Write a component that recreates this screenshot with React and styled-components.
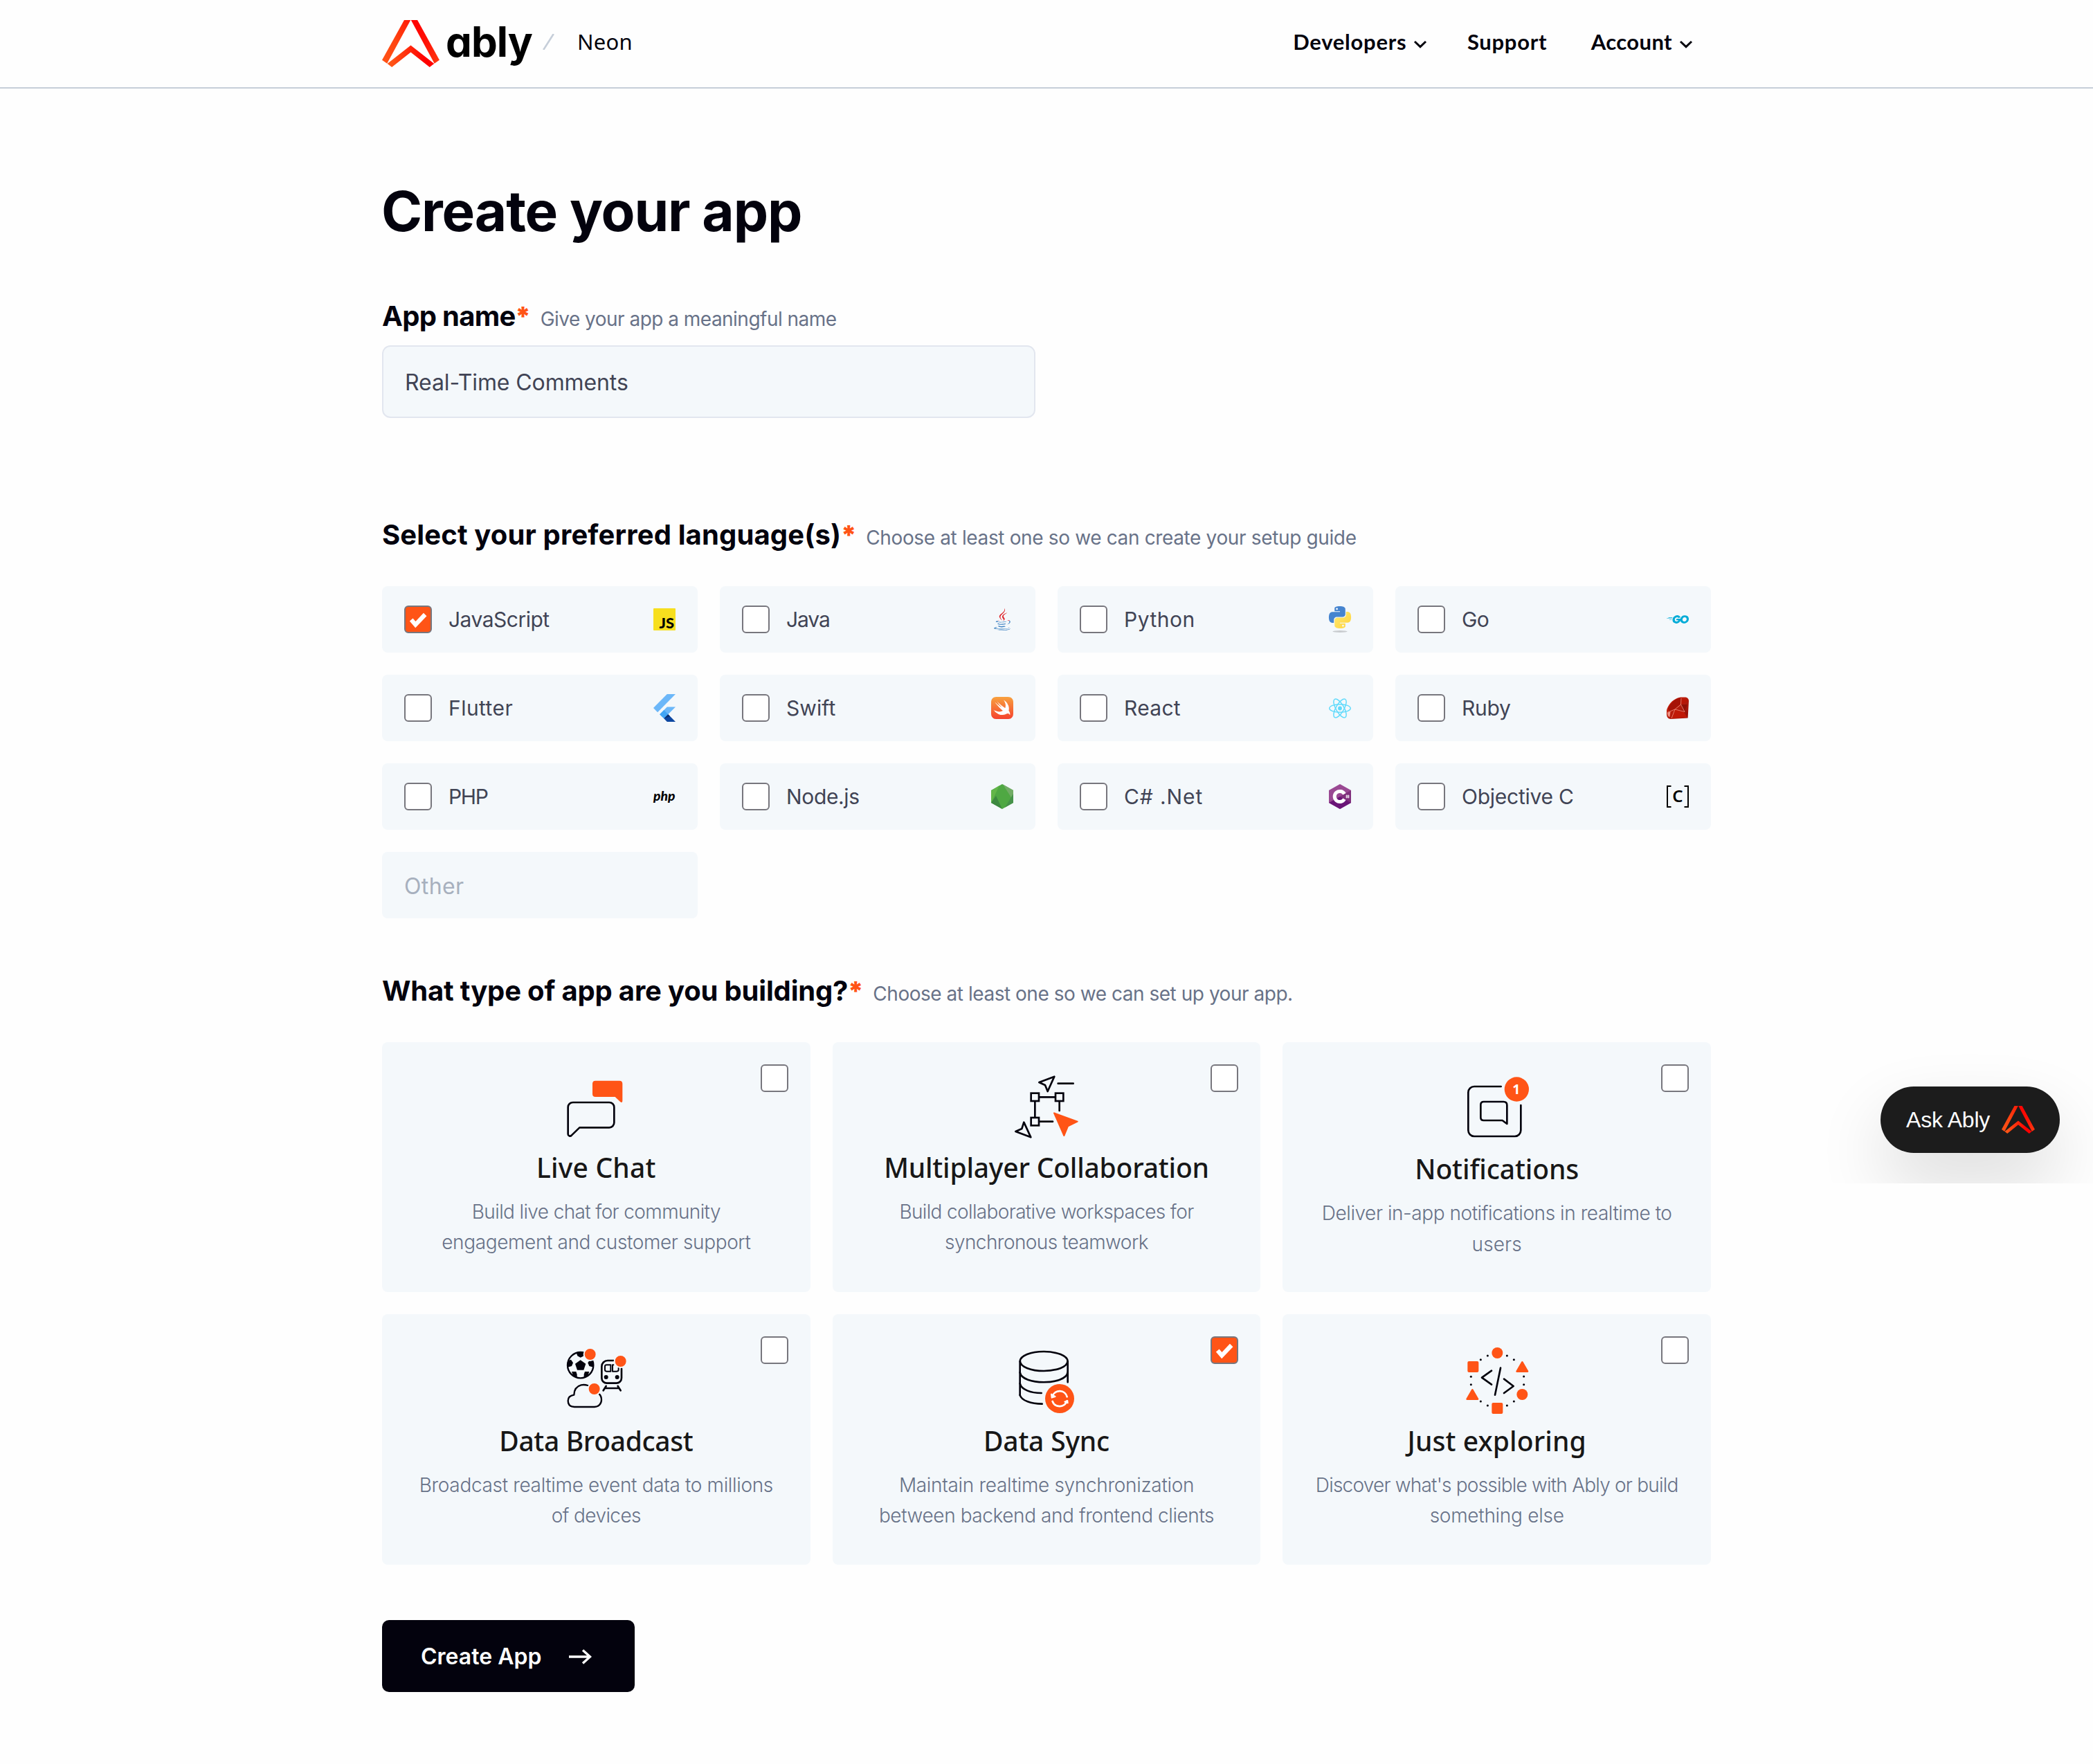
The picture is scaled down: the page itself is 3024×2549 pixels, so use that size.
import React from "react";
import styled, { createGlobalStyle, css } from "styled-components";
import { FaJava } from "react-icons/fa";
import { SiGo, SiSwift } from "react-icons/si";

const color = {
  page: "#fefefe",
  ink: "#03020d",
  text: "#414455",
  muted: "#687288",
  faint: "#a7b0be",
  panel: "#f4f8fb",
  line: "#c6ced9",
  orange: "#ff5416",
};

const sans = `Inter, "Noto Sans", sans-serif`;
const humanist = `Lato, "Noto Sans", sans-serif`;

const GlobalStyle = createGlobalStyle`
  *, *::before, *::after { box-sizing: border-box; }
  body {
    margin: 0;
    background: ${color.page};
    color: ${color.ink};
    font-family: ${sans};
  }
`;

const Page = styled.div`
  position: relative;
  min-height: 2549px;
  overflow: hidden;
`;

/* ---------- header ---------- */

const Header = styled.header`
  height: 128px;
  border-bottom: 2px solid ${color.line};
  background: ${color.page};
`;

const HeaderInner = styled.div`
  width: 1920px;
  height: 100%;
  margin: 0 auto;
  display: flex;
  align-items: center;
`;

const Brand = styled.div`
  display: flex;
  align-items: center;
  flex: 1;
`;

const Wordmark = styled.span`
  width: 123px;
  padding-bottom: 6px;
  margin-left: 9px;
  font-family: Inter, sans-serif;
  font-weight: 700;
  font-size: 60px;
  line-height: 72px;
  letter-spacing: -0.9px;
  font-feature-settings: "cv11" 1;
  color: #000;
`;

const SlashIcon = styled.svg`
  width: 17px;
  height: 23px;
  margin: 0 33px 5px 17px;
`;

const OrgName = styled.span`
  padding-bottom: 6px;
  font: 400 31px/40px "Noto Sans", sans-serif;
  letter-spacing: 0.2px;
`;

const Nav = styled.nav`
  display: flex;
  align-items: center;
  padding: 0 26px 6px 0;
`;

const NavItem = styled.a`
  display: flex;
  align-items: center;
  gap: 10px;
  margin-left: ${(p) => p.$before || 0}px;
  font: 700 31px/40px ${humanist};
  letter-spacing: ${(p) => p.$ls}px;
`;

const ChevronIcon = styled.svg`
  width: 20px;
  height: 12px;
  margin-top: 8px;
`;

/* ---------- form ---------- */

const Main = styled.main`
  width: 1920px;
  margin: 0 auto;
  padding-top: 129px;
`;

const Title = styled.h1`
  margin: 0 0 80px -1px;
  font: 700 80px/96px ${sans};
  letter-spacing: -1.13px;
`;

const FieldLabel = styled.div`
  display: flex;
  align-items: baseline;
  height: 48px;
  margin-bottom: ${(p) => p.$gap}px;
`;

const LabelText = styled.label`
  font: 700 40px/48px ${sans};
  letter-spacing: ${(p) => p.$ls}px;
  white-space: nowrap;
`;

const Required = styled.span`
  width: 20px;
  margin: 0 15px 0 1px;
  display: flex;
  justify-content: center;
  font: 900 38px/48px ${sans};
  color: ${color.orange};
`;

const Hint = styled.span`
  font: 400 28px/48px ${sans};
  letter-spacing: ${(p) => p.$ls}px;
  color: ${color.muted};
  white-space: nowrap;
`;

const NameInput = styled.input`
  display: block;
  width: 944px;
  height: 105px;
  margin: 0 0 145px;
  padding: 2px 31px 0;
  border: 2px solid #e2e6ef;
  border-radius: 12px;
  outline: none;
  background: ${color.panel};
  color: ${color.text};
  font: 400 32px ${sans};
  letter-spacing: -0.1px;
`;

const LanguageGrid = styled.div`
  display: grid;
  grid-template-columns: repeat(4, 1fr);
  grid-auto-rows: 96px;
  gap: 32px;
  margin-bottom: 81px;
`;

const LanguageCard = styled.label`
  display: flex;
  align-items: center;
  gap: 24px;
  padding: 0 32px;
  border-radius: 8px;
  background: ${color.panel};
`;

const LanguageName = styled.span`
  flex: 1;
  font: 400 30px/40px ${sans};
  letter-spacing: ${(p) => p.$ls}px;
  color: ${color.text};
  white-space: nowrap;
`;

const IconSlot = styled.span`
  width: 32px;
  height: 40px;
  display: flex;
  align-items: center;
  justify-content: center;
  svg { display: block; overflow: visible; }
`;

const OtherInput = styled.input`
  width: 100%;
  height: 96px;
  padding: 3px 32px 0;
  border: 0;
  border-radius: 8px;
  outline: none;
  background: ${color.panel};
  font: 400 32px ${sans};
  letter-spacing: 0.37px;
  &::placeholder { color: ${color.faint}; opacity: 1; }
`;

const checkedStyle = css`
  background: ${color.orange};
`;

const Box = styled.span`
  flex: none;
  width: 40px;
  height: 40px;
  border: 2px solid #77767d;
  border-radius: 6px;
  background: #fff;
  ${(p) => p.$checked && checkedStyle}
  svg { display: block; width: 36px; height: 36px; }
`;

function Checkbox({ checked, className }) {
  return (
    <Box $checked={checked} className={className}>
      {checked && (
        <svg viewBox="0 0 36 36">
          <path d="M8.2 18.5 14.3 25.6 28.2 11" fill="none" stroke="#fff" strokeWidth="6.200" />
        </svg>
      )}
    </Box>
  );
}

/* ---------- app types ---------- */

const TypeGrid = styled.div`
  display: grid;
  grid-template-columns: repeat(3, 1fr);
  grid-template-rows: 361px 362px;
  gap: 32px;
  margin-bottom: 80px;
`;

const TypeCard = styled.label`
  position: relative;
  display: flex;
  flex-direction: column;
  align-items: center;
  padding-top: 44px;
  border-radius: 8px;
  background: ${color.panel};
`;

const CornerCheckbox = styled(Checkbox)`
  position: absolute;
  top: 32px;
  right: 32px;
`;

const TypeIcon = styled.svg`
  width: 100px;
  height: 104px;
  overflow: visible;
  fill: none;
  stroke: ${color.ink};
  stroke-width: 8;
  stroke-linecap: round;
  stroke-linejoin: round;
`;

const TypeName = styled.h2`
  margin: ${(p) => 5 + p.$drop}px 0 13.5px;
  font: 500 39px/56px "Noto Sans", sans-serif;
  letter-spacing: ${(p) => p.$ls}px;
  color: #171717;
  white-space: nowrap;
`;

const TypeLine = styled.span`
  font: 300 28px/44.7px ${sans};
  letter-spacing: ${(p) => p.$ls}px;
  color: ${color.muted};
  white-space: nowrap;
`;

const SubmitButton = styled.button`
  width: 365px;
  height: 104px;
  padding: 1px 0 0 56px;
  display: flex;
  align-items: center;
  gap: 39px;
  border: 0;
  border-radius: 10px;
  background: ${color.ink};
  color: #fff;
  font: 600 32px/40px ${sans};
  svg { width: 34px; height: 24px; }
`;

/* ---------- floating assistant ---------- */

const AssistantFrame = styled.aside`
  position: absolute;
  top: 1440px;
  right: 0;
  width: 384px;
  height: 270px;
  overflow: hidden;
  display: flex;
  justify-content: flex-end;
  align-items: flex-end;
  padding: 0 48px 44px 0;
`;

const AssistantPill = styled.button`
  width: 259px;
  height: 96px;
  padding: 0 36px 0 37px;
  display: flex;
  align-items: center;
  justify-content: space-between;
  border: 0;
  border-radius: 48px;
  background: #1c1c1c;
  box-shadow: 0 44px 100px rgba(0, 0, 0, 0.14);
  color: #fff;
  font: 400 32px/40px "Liberation Sans", Arial, sans-serif;
  letter-spacing: -0.2px;
  white-space: nowrap;
`;

/* ---------- drawings ---------- */

function AblyMark({ id, width, height }) {
  return (
    <svg width={width} height={height} viewBox="0 0 82.5 68" preserveAspectRatio="none">
      <defs>
        <linearGradient id={`${id}-l`} x1="0" y1="1" x2="1" y2="0">
          <stop offset="0" stopColor="#ff5416" />
          <stop offset="0.5" stopColor="#ff4411" />
          <stop offset="1" stopColor="#ff1a06" />
        </linearGradient>
        <linearGradient id={`${id}-r`} x1="0" y1="0" x2="1" y2="1">
          <stop offset="0" stopColor="#ff0000" />
          <stop offset="0.5" stopColor="#ff1005" />
          <stop offset="1" stopColor="#ff3a10" />
        </linearGradient>
        <linearGradient id={`${id}-c`} x1="0" y1="0" x2="1" y2="0">
          <stop offset="0.1" stopColor="#ff5416" />
          <stop offset="0.8" stopColor="#ff0000" />
        </linearGradient>
      </defs>
      <path d="M31.8 0H41L7.2 62.8 0 57.8Z" fill={`url(#${id}-l)`} />
      <path d="M41.6 0H50.8L82.4 57.8 75.2 62.8Z" fill={`url(#${id}-r)`} />
      <path d="M7.6 63 41.2 36.6 74.8 63 68.3 68 41.2 46.4 14.1 68Z" fill={`url(#${id}-c)`} />
    </svg>
  );
}

const Chevron = () => (
  <ChevronIcon viewBox="0 0 20 12">
    <path d="M2 2 10 9.6 18 2" fill="none" stroke={color.ink} strokeWidth="3" />
  </ChevronIcon>
);

const JsIcon = () => (
  <svg width="32" height="32" viewBox="0 0 32 32">
    <rect width="32" height="32" rx="1" fill="#f7df1e" />
    <text x="8.4" y="28.8" textLength="21.6" lengthAdjust="spacingAndGlyphs" fontFamily="Lato" fontWeight="900" fontSize="20">JS</text>
  </svg>
);

const JavaIcon = () => (
  <>
    <svg width="0" height="0">
      <linearGradient id="java" x1="0" y1="0" x2="0" y2="1">
        <stop offset="0.56" stopColor="#e0242b" />
        <stop offset="0.56" stopColor="#3a7fc0" />
      </linearGradient>
    </svg>
    <FaJava size={32} fill="url(#java)" />
  </>
);

const pythonHalf =
  "M14.25.18l.9.2.73.26.59.3.45.32.34.34.25.34.16.33.1.3.04.26.02.2-.01.13V8.5l-.05.63-.13.55-.21.46-.26.38-.3.31-.33.25-.35.19-.35.14-.33.1-.3.07-.26.04-.21.02H8.77l-.69.05-.59.14-.5.22-.41.27-.33.32-.27.35-.2.36-.15.37-.1.35-.07.32-.04.27-.02.21v3.06H3.17l-.21-.03-.28-.07-.32-.12-.35-.18-.36-.26-.36-.36-.35-.46-.32-.59-.28-.73-.21-.88-.14-1.05-.05-1.23.06-1.22.16-1.04.24-.87.32-.71.36-.57.4-.44.42-.33.42-.24.4-.16.36-.1.32-.05.24-.01h.16l.06.01h8.16v-.83H6.18l-.01-2.75-.02-.37.05-.34.11-.31.17-.28.25-.26.31-.23.38-.2.44-.18.51-.15.58-.12.64-.1.71-.06.77-.04.84-.02 1.27.05zm-6.3 1.98l-.23.33-.08.41.08.41.23.34.33.22.41.09.41-.09.33-.22.23-.34.08-.41-.08-.41-.23-.33-.33-.22-.41-.09-.41.09z";

const PythonIcon = () => (
  <svg width="32" height="39" viewBox="0 0 24 29.25">
    <linearGradient id="py-y" x1="0" y1="0" x2="1" y2="1">
      <stop offset="0" stopColor="#ffd43b" />
      <stop offset="1" stopColor="#ffe873" />
    </linearGradient>
    <ellipse cx="12" cy="27.4" rx="8" ry="1.1" fill="#c9cccf" />
    <path d={pythonHalf} fill="#4584cf" />
    <path d={pythonHalf} fill="url(#py-y)" transform="rotate(180 12 12)" />
  </svg>
);

const GoIcon = () => <SiGo size={32} color="#00acd7" />;

const FlutterIcon = () => (
  <svg width="32" height="40" viewBox="2.3 0 19.4 24" preserveAspectRatio="none">
    <path d="M14.3 0 2.3 12 6 15.7 21.7 0Z" fill="#6bb7f9" />
    <path d="M14.3 11.07 7.86 17.53 11.55 21.2 21.7 11.07Z" fill="#6bb7f9" />
    <path d="M7.86 17.53 11.55 13.84 15.24 17.53 11.55 21.22Z" fill="#42a5f5" />
    <path d="M11.55 21.22 15.24 17.53 21.7 24H14.33Z" fill="#0d47a1" />
    <path d="M11.55 21.22 17 19.3 15.24 17.53Z" fill="#0a2f70" />
  </svg>
);

const SwiftIcon = () => (
  <svg width="32" height="32" viewBox="0 0 32 32">
    <linearGradient id="swift" x1="0" y1="0" x2="0" y2="1">
      <stop offset="0" stopColor="#f8a13e" />
      <stop offset="1" stopColor="#f5432f" />
    </linearGradient>
    <rect x="3" y="3" width="26" height="26" fill="#fff" />
    <SiSwift size={32} fill="url(#swift)" />
  </svg>
);

const ReactIcon = () => (
  <svg width="32" height="29" viewBox="-16 -14.5 32 29" fill="none" stroke="#61dafb" strokeWidth="1.5">
    {[0, 60, 120].map((angle) => (
      <ellipse key={angle} rx="15.2" ry="5.8" transform={`rotate(${angle})`} />
    ))}
    <circle r="2.9" fill="#61dafb" stroke="none" />
  </svg>
);

const RubyIcon = () => (
  <svg width="32" height="32" viewBox="0 0 32 32">
    <linearGradient id="ruby" x1="0" y1="0" x2="1" y2="1">
      <stop offset="0" stopColor="#dd2a12" />
      <stop offset="1" stopColor="#8c0d06" />
    </linearGradient>
    <path d="M25 .6C29 .2 32 2 32 6L30.6 30.6 6 32C2 32 0 29 0 25V19C2 12 7 6 13 3 17 .6 20 .5 25 .6Z" fill="url(#ruby)" />
    <path d="M20 1C13 2 5 9 2 17L4 22 12 17 20 10 22 4Z" fill="#a51307" />
    <path d="M22 2 32 5 21 11Z" fill="#b81606" />
    <path d="M20 11 30 11 26 21Z" fill="#8e1006" />
    <path d="M13 18 25 22 30 30 7 31Z" fill="#c01a08" />
    <path d="M21 2 20.5 11 12 18 1 22.5M12 18 7 31M20.5 11 26 21.5M12 18 26 21.5" fill="none" stroke="#f0907f" strokeWidth="0.8" />
    <path d="M1 23 5.5 21 4.5 29C2.5 29 1 26 1 23Z" fill="#ef9183" />
  </svg>
);

const PhpIcon = () => (
  <svg width="32" height="18" viewBox="0 0 32 18">
    <text x="0" y="14.5" textLength="31.5" lengthAdjust="spacingAndGlyphs" fontFamily="Lato" fontStyle="italic" fontWeight="900" fontSize="19">php</text>
  </svg>
);

const NodeIcon = () => (
  <svg width="32" height="36" viewBox="0 0 32 36">
    <path d="M16 0 32 9V27L16 36 0 27V9Z" fill="#4fa843" />
    <path d="M0 10 12 1.9 0 27Z" fill="#63b649" />
    <path d="M17 .6 32 9V24Z" fill="#72ac66" />
    <path d="M0 27 7 17 16 36Z" fill="#3d8840" />
    <path d="M20 33.7 32 14V27Z" fill="#46924a" />
  </svg>
);

const CSharpIcon = () => (
  <svg width="32" height="36" viewBox="0 0 32 36">
    <path d="M16 0 32 9V27L16 36 0 27V9Z" fill="#9a4993" />
    <path d="M32 9V27L16 18Z" fill="#80307c" />
    <path d="M0 27 16 18 32 27 16 36Z" fill="#6a1577" />
    <path d="M22.4 14.2A7.6 7.6 0 1 0 22.4 21.8" fill="none" stroke="#fff" strokeWidth="5" />
    <path d="M25.8 15.5V20.5M28.2 15.5V20.5M24.4 17H29.6M24.4 19H29.6" stroke="#fff" strokeWidth="0.9" />
  </svg>
);

const ObjectiveCIcon = () => (
  <svg width="32" height="32" viewBox="0 0 32 32">
    <path d="M6.5 1H1V31H6.5M25.5 1H31V31H25.5" fill="none" stroke="#000" strokeWidth="2" />
    <text x="16" y="24.2" textAnchor="middle" fontFamily="Noto Sans" fontWeight="600" fontSize="24">C</text>
  </svg>
);

const LiveChatIcon = () => (
  <TypeIcon viewBox="94 30 300 312">
    <path d="M242 65H346Q359 65 359 78V152Q359 162 350 157L327 135H242Q229 135 229 122V78Q229 65 242 65Z" fill={color.orange} stroke="none" />
    <path d="M144 159H302A21 21 0 0 1 323 180V247A21 21 0 0 1 302 268H173L139 301Q134 307 128 304 123 302 123 296V180A21 21 0 0 1 144 159Z" />
  </TypeIcon>
);

const MultiplayerIcon = () => (
  <TypeIcon viewBox="186 60 300 312">
    <g strokeLinejoin="miter">
      <rect x="269" y="149" width="34" height="34" />
      <rect x="375" y="149" width="34" height="34" />
      <rect x="269" y="255" width="34" height="34" />
    </g>
    <path d="M305 166H373M286 185V253M392 185V225M305 272H363" />
    <path d="M386 107H452" />
    <path d="M370 77 304 102 330 114 341 141Z" />
    <path d="M238 275 268 340 202 315 229 303Z" />
    <path d="M369 235 470 272 429 292 412 333Z" fill={color.orange} stroke={color.orange} strokeWidth="6" />
  </TypeIcon>
);

const NotificationsIcon = () => (
  <TypeIcon viewBox="158 60 300 312">
    <path d="M325 120H209A26 26 0 0 0 183 146V310A26 26 0 0 0 209 336H385A26 26 0 0 0 411 310V201" />
    <path d="M250 186H336Q351 186 351 201V282L331 267H250Q237 267 237 254V199Q237 186 250 186Z" />
    <circle cx="393" cy="132" r="53" fill={color.orange} stroke="none" />
    <text x="391" y="153" textAnchor="middle" fill="#fff" stroke="none" fontFamily="Noto Sans" fontWeight="700" fontSize="58">1</text>
  </TypeIcon>
);

const BroadcastIcon = () => (
  <TypeIcon viewBox="94 99 300 312">
    <circle cx="177" cy="188" r="56" strokeWidth="7" />
    <g fill={color.ink} stroke="none">
      <path d="M177 166 200 182 191 209H163L154 182Z" />
      <path d="M158 132H196L189 149 177 155 164 148Z" />
      <path d="M121 197 125 168 136 164 145 178 139 192Z" />
      <path d="M233 197 229 168 218 164 209 178 215 192Z" />
      <path d="M139 216H158L162 228V241L146 236Z" />
      <path d="M215 216H196L192 228V241L208 236Z" />
    </g>
    <path d="M320 168H295A26 26 0 0 0 269 194V244A22 22 0 0 0 291 266H333A22 22 0 0 0 355 244V203" />
    <path d="M308 187H290Q283 187 283 194V208Q283 215 290 215H308ZM316 187V215H334Q342 215 342 208V200M316 187H320" strokeWidth="6" />
    <circle cx="288" cy="240" r="9" fill={color.ink} stroke="none" />
    <circle cx="336" cy="240" r="9" fill={color.ink} stroke="none" />
    <path d="M288 279 276 298M339 279 351 298M284 288H343" />
    <path d="M209 276Q194 271 180 274 150 282 149 317 123 321 123 342 123 369 151 369H238A30 30 0 0 0 268 339Q268 323 259 314" strokeWidth="7" />
    <g fill={color.orange} stroke={color.panel} strokeWidth="6">
      <circle cx="219" cy="141" r="27" />
      <circle cx="351" cy="171" r="27" />
      <circle cx="237" cy="291" r="27" />
    </g>
  </TypeIcon>
);

const DataSyncIcon = () => (
  <TypeIcon viewBox="186 99 300 312">
    <ellipse cx="324.500" cy="171" rx="103" ry="42" />
    <path d="M221 171V318M428 171V262" />
    <path d="M221 219C228 276 420 276 428 219" />
    <path d="M221 267C226 294 268 309 314 309" />
    <path d="M221 318C228 342 270 356 317 356" />
    <circle cx="393" cy="333" r="63" fill={color.orange} stroke="none" />
    <g stroke="#fff" strokeWidth="8">
      <path d="M362 322A33 33 0 0 1 425 325M424 344A33 33 0 0 1 362 345" />
      <path d="M357 314 359 329 374 324ZM428 352 427 342 415 347Z" fill="#fff" strokeWidth="6" />
    </g>
  </TypeIcon>
);

const ringDots = [
  [267, 147], [237, 164], [351, 147], [381, 164], [195, 238], [195, 272],
  [424, 237], [424, 272], [237, 345], [267, 363], [351, 363], [381, 345],
];

const ExploringIcon = () => (
  <TypeIcon viewBox="158 99 300 312">
    {ringDots.map(([x, y]) => (
      <circle key={`${x}-${y}`} cx={x} cy={y} r="4.600" fill={color.ink} stroke="none" />
    ))}
    <path d="M284 212 242 242 284 272M323 200 299 317M338 248 379 279 338 309" />
    <g fill={color.orange} stroke="none">
      <circle cx="309" cy="135" r="24" />
      <circle cx="417" cy="315" r="24" />
      <rect x="180" y="171" width="48" height="48" rx="6" />
      <rect x="285" y="351" width="48" height="48" rx="6" />
    </g>
    <g fill={color.orange} stroke={color.orange}>
      <path d="M417 175 440 215H394Z" />
      <path d="M201 295 224 335H178Z" />
    </g>
  </TypeIcon>
);

/* ---------- data ---------- */

const languages = [
  { name: "JavaScript", ls: -0.5, Icon: JsIcon, checked: true },
  { name: "Java", ls: -1.1, Icon: JavaIcon },
  { name: "Python", ls: 0.5, Icon: PythonIcon },
  { name: "Go", ls: -0.7, Icon: GoIcon },
  { name: "Flutter", ls: 0.45, Icon: FlutterIcon },
  { name: "Swift", ls: 0.1, Icon: SwiftIcon },
  { name: "React", ls: 0.3, Icon: ReactIcon },
  { name: "Ruby", ls: -0.3, Icon: RubyIcon },
  { name: "PHP", ls: -1.4, Icon: PhpIcon },
  { name: "Node.js", ls: -0.35, Icon: NodeIcon },
  { name: "C# .Net", ls: 0.9, Icon: CSharpIcon },
  { name: "Objective C", ls: -0.25, Icon: ObjectiveCIcon },
];

const appTypes = [
  {
    name: "Live Chat", ls: 0.2, drop: 0, Icon: LiveChatIcon,
    lines: [["Build live chat for community", -0.62], ["engagement and customer support", -0.38]],
  },
  {
    name: "Multiplayer Collaboration", ls: -0.2, drop: 0, Icon: MultiplayerIcon,
    lines: [["Build collaborative workspaces for", -0.64], ["synchronous teamwork", -0.57]],
  },
  {
    name: "Notifications", ls: -0.1, drop: 2.3, Icon: NotificationsIcon,
    lines: [["Deliver in-app notifications in realtime to", -0.44], ["users", 0.1]],
  },
  {
    name: "Data Broadcast", ls: -0.35, drop: 2, Icon: BroadcastIcon,
    lines: [["Broadcast realtime event data to millions", -0.34], ["of devices", -0.59]],
  },
  {
    name: "Data Sync", ls: -0.2, drop: 2, Icon: DataSyncIcon, checked: true,
    lines: [["Maintain realtime synchronization", -0.32], ["between backend and frontend clients", -0.42]],
  },
  {
    name: "Just exploring", ls: 0.1, drop: 2, Icon: ExploringIcon,
    lines: [["Discover what's possible with Ably or build", -0.79], ["something else", -0.27]],
  },
];

function SectionLabel({ text, ls, hint, hintLs, gap }) {
  return (
    <FieldLabel $gap={gap}>
      <LabelText $ls={ls}>{text}</LabelText>
      <Required>*</Required>
      <Hint $ls={hintLs}>{hint}</Hint>
    </FieldLabel>
  );
}

export default function App() {
  return (
    <Page>
      <GlobalStyle />
      <Header>
        <HeaderInner>
          <Brand>
            <AblyMark id="brand" width="83" height="68" />
            <Wordmark>ably</Wordmark>
            <SlashIcon viewBox="0 0 17 23">
              <path d="M1.2 23 15.8 0" stroke={color.line} strokeWidth="2.6" />
            </SlashIcon>
            <OrgName>Neon</OrgName>
          </Brand>
          <Nav>
            <NavItem $ls={0.75}>Developers<Chevron /></NavItem>
            <NavItem $ls={0.7} $before={57.5}>Support</NavItem>
            <NavItem $ls={0.4} $before={63.5}>Account<Chevron /></NavItem>
          </Nav>
        </HeaderInner>
      </Header>

      <Main>
        <Title>Create your app</Title>

        <SectionLabel text="App name" ls={-0.7} hint="Give your app a meaningful name" hintLs={-0.52} gap={18} />
        <NameInput defaultValue="Real-Time Comments" />

        <SectionLabel
          text="Select your preferred language(s)"
          ls={0.14}
          hint="Choose at least one so we can create your setup guide"
          hintLs={-0.36}
          gap={50}
        />
        <LanguageGrid>
          {languages.map(({ name, ls, Icon, checked }) => (
            <LanguageCard key={name}>
              <Checkbox checked={checked} />
              <LanguageName $ls={ls}>{name}</LanguageName>
              <IconSlot><Icon /></IconSlot>
            </LanguageCard>
          ))}
          <OtherInput placeholder="Other" />
        </LanguageGrid>

        <SectionLabel
          text="What type of app are you building?"
          ls={-0.18}
          hint="Choose at least one so we can set up your app."
          hintLs={-0.47}
          gap={50}
        />
        <TypeGrid>
          {appTypes.map(({ name, ls, drop, Icon, checked, lines }) => (
            <TypeCard key={name}>
              <CornerCheckbox checked={checked} />
              <Icon />
              <TypeName $ls={ls} $drop={drop}>{name}</TypeName>
              {lines.map(([line, spacing]) => (
                <TypeLine key={line} $ls={spacing}>{line}</TypeLine>
              ))}
            </TypeCard>
          ))}
        </TypeGrid>

        <SubmitButton>
          Create App
          <svg viewBox="0 0 34 24">
            <path d="M1 12H31M21 2.500 31.500 12 21 21.500" fill="none" stroke="#fff" strokeWidth="3.400" />
          </svg>
        </SubmitButton>
      </Main>

      <AssistantFrame>
        <AssistantPill>
          Ask Ably
          <AblyMark id="assistant" width="48" height="40" />
        </AssistantPill>
      </AssistantFrame>
    </Page>
  );
}
